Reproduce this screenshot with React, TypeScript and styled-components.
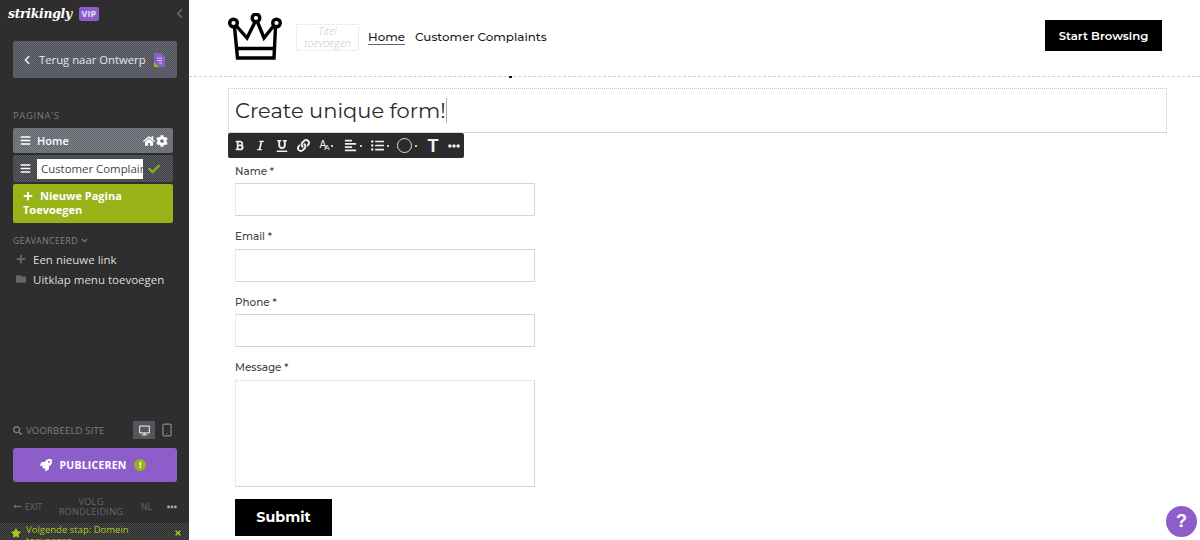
import React from "react";
import styled, { createGlobalStyle } from "styled-components";
import {
  FaAlignLeft,
  FaBars,
  FaBold,
  FaCheck,
  FaChevronDown,
  FaChevronLeft,
  FaCog,
  FaDesktop,
  FaEllipsisH,
  FaFolder,
  FaHome,
  FaItalic,
  FaLink,
  FaListUl,
  FaLongArrowAltLeft,
  FaPlus,
  FaRocket,
  FaSearch,
  FaStar,
  FaTimes,
  FaUnderline,
} from "react-icons/fa";
import { Smartphone } from "lucide-react";

const GlobalStyle = createGlobalStyle`
  html, body {
    margin: 0;
    padding: 0;
    height: 540px;
    overflow: hidden;
    background: #fff;
  }
  * { box-sizing: border-box; }
`;

const dither = (a: string, b: string) =>
  `repeating-conic-gradient(${a} 0 25%, ${b} 0 50%) 0 0 / 2px 2px`;

const Page = styled.div`
  position: relative;
  display: flex;
  width: 1200px;
  height: 540px;
  overflow: hidden;
  font-family: "Open Sans", "Liberation Sans", sans-serif;
`;

const Sidebar = styled.aside`
  display: flex;
  flex-direction: column;
  width: 189px;
  height: 540px;
  flex: none;
  background: #2e2e2e;
  color: #e4e4e4;
`;

const BrandRow = styled.div`
  display: flex;
  align-items: center;
  height: 27px;
  padding: 0 4px 0 8px;
`;

const Wordmark = styled.span`
  font-family: "DejaVu Serif", serif;
  font-style: italic;
  font-weight: 700;
  font-size: 12.4px;
  letter-spacing: -0.3px;
  color: #fff;
`;

const VipBadge = styled.span`
  margin-left: 7px;
  width: 20px;
  height: 14px;
  border-radius: 2px;
  background: #8d5ec9;
  color: #e8e0f4;
  font-size: 9px;
  font-weight: 700;
  line-height: 14px;
  text-align: center;
`;

const Collapse = styled.span`
  margin-left: auto;
  display: flex;
  color: #666;
  font-size: 11px;
`;

const BackButton = styled.div`
  display: flex;
  align-items: center;
  margin: 14px 12px 0 13px;
  height: 37px;
  padding: 0 12px 0 9px;
  border-radius: 2px;
  background: ${dither("#50525c", "#666871")};
  font-size: 11.3px;
  color: #e6e6e6;
  > svg:first-child { font-size: 10px; margin-right: 7px; }
  > svg:last-child { margin-left: auto; }
`;

const SectionLabel = styled.div`
  margin: 31px 0 0 13px;
  height: 14px;
  font-size: 9.5px;
  line-height: 14px;
  letter-spacing: 0.6px;
  color: #7c7c7c;
`;

const PageList = styled.div`
  display: flex;
  flex-direction: column;
  gap: 2px;
  margin: 5px 16px 0 13px;
`;

const PageRow = styled.div<{ $editing?: boolean }>`
  display: flex;
  align-items: center;
  height: ${(p) => (p.$editing ? "27px" : "25px")};
  padding: 0 5px 0 7px;
  border-radius: 2px;
  background: ${(p) =>
    p.$editing ? dither("#3f4047", "#5a5c64") : dither("#666871", "#7b7d85")};
  color: #fff;
  font-size: 11px;
  font-weight: 600;
  gap: 6px;
`;

const RowIcons = styled.span`
  display: flex;
  align-items: center;
  gap: 1px;
  margin-left: auto;
  font-size: 12px;
`;

const NameInput = styled.span`
  width: 106px;
  height: 20px;
  padding: 0 4px;
  background: #fff;
  color: #444;
  font-size: 11.4px;
  font-weight: 400;
  line-height: 20px;
  white-space: nowrap;
  overflow: hidden;
`;

const SaveCheck = styled.span`
  display: flex;
  margin-left: -1px;
  color: #8ea61c;
  font-size: 12px;
`;

const AddPage = styled.div`
  height: 39px;
  padding: 5px 5px 0 10px;
  border-radius: 2px;
  background: #97b317;
  color: #fff;
  font-size: 11px;
  font-weight: 700;
  line-height: 14px;
  svg { font-size: 10px; margin-right: 7px; vertical-align: -1px; }
`;

const AdvancedLabel = styled.div`
  display: flex;
  align-items: center;
  gap: 3px;
  margin: 11px 0 3px 13px;
  height: 12px;
  font-size: 8.5px;
  letter-spacing: 0.5px;
  color: #858585;
  svg { font-size: 7px; }
`;

const ExtraLink = styled.div`
  display: flex;
  align-items: center;
  height: 20px;
  padding-left: 16px;
  font-size: 11.5px;
  color: #ddd;
  svg { width: 10px; font-size: 10px; margin-right: 7px; color: #666; }
`;

const SideBottom = styled.div`
  margin-top: auto;
`;

const PreviewRow = styled.div`
  display: flex;
  align-items: center;
  height: 18px;
  padding-left: 13px;
  font-size: 9.5px;
  letter-spacing: 0.2px;
  color: #7e7e7e;
  svg { flex: none; }
`;

const PreviewText = styled.span`
  margin-left: 4px;
  width: 107px;
`;

const DeviceButton = styled.span<{ $active?: boolean }>`
  display: flex;
  align-items: center;
  justify-content: center;
  width: 22px;
  height: 18px;
  margin-right: 1px;
  background: ${(p) => (p.$active ? dither("#4a4c53", "#5e6067") : "transparent")};
  color: ${(p) => (p.$active ? "#d8d8d8" : "#8a8a8a")};
  font-size: 11px;
`;

const PublishButton = styled.div`
  display: flex;
  align-items: center;
  justify-content: center;
  margin: 9px 12px 0 13px;
  height: 34px;
  padding-right: 4px;
  border-radius: 3px;
  background: #8d5ec9;
  color: #fff;
  font-size: 10.5px;
  font-weight: 700;
  letter-spacing: 0.2px;
  svg { font-size: 12px; margin-right: 8px; }
`;

const Notice = styled.span`
  display: inline-block;
  width: 12px;
  height: 12px;
  margin-left: 8px;
  border-radius: 50%;
  background: #97b317;
  color: #fff;
  font-size: 9px;
  line-height: 12px;
  text-align: center;
`;

const FooterNav = styled.div`
  display: flex;
  align-items: center;
  height: 41px;
  padding: 8px 12px 0 13px;
  color: #666;
  font-size: 8.5px;
  letter-spacing: 0.2px;
`;

const FooterExit = styled.span`
  display: flex;
  align-items: center;
  gap: 3px;
  width: 43px;
  svg { font-size: 9px; }
`;

const FooterGuide = styled.span`
  width: 70px;
  font-size: 9.3px;
  line-height: 10px;
  text-align: center;
`;

const FooterLang = styled.span`
  margin-left: 15px;
`;

const FooterMore = styled.span`
  display: flex;
  margin-left: auto;
  font-size: 10px;
  color: #aaa;
`;

const NextStep = styled.div`
  display: flex;
  height: 17px;
  overflow: hidden;
  padding: 1px 7px 0 11px;
  background: ${dither("#2a2a2a", "#4a4a4a")};
  color: #a9c91e;
  font-size: 9.5px;
  line-height: 11px;
`;

const NextStepStar = styled.span`
  display: flex;
  flex: none;
  margin: 4px 5px 0 0;
  font-size: 10px;
`;

const NextStepClose = styled.span`
  display: flex;
  flex: none;
  margin: 5px 0 0 auto;
  font-size: 8px;
`;

const NextStepText = styled.span`
  width: 118px;
`;

const Main = styled.main`
  flex: 1;
  min-width: 0;
  height: 540px;
  overflow: hidden;
  background: #fff;
  font-family: "Montserrat", "Noto Sans", "Open Sans", sans-serif;
`;

const SiteHeader = styled.header`
  position: relative;
  display: flex;
  align-items: center;
  height: 77px;
  padding: 0 38px 5px 39px;
  border-bottom: 1px dashed #cfcfcf;
`;

const CrownSvg = styled.svg`
  flex: none;
  margin-top: 1px;
`;

const SiteTitle = styled.div`
  width: 63px;
  height: 27px;
  margin: 4px 0 0 14px;
  border: 1px dotted #dcdcdc;
  color: #c8c8c8;
  font-family: "Open Sans", sans-serif;
  font-style: italic;
  font-weight: 300;
  font-size: 10.5px;
  line-height: 12px;
  text-align: center;
`;

const SiteNav = styled.nav`
  display: flex;
  gap: 10px;
  margin: 2px 0 0 9px;
`;

const NavLink = styled.span<{ $active?: boolean }>`
  font-size: 11.9px;
  font-weight: 500;
  line-height: 15px;
  color: #1c1c1c;
  border-bottom: 1px solid ${(p) => (p.$active ? "#666" : "transparent")};
`;

const StartButton = styled.div`
  margin: 0 0 0 auto;
  width: 117px;
  height: 31px;
  background: #000;
  color: #fff;
  font-size: 11.7px;
  font-weight: 600;
  line-height: 32px;
  text-align: center;
`;

const HeaderDot = styled.span`
  position: absolute;
  left: 320px;
  bottom: -2px;
  width: 3px;
  height: 2px;
  background: #111;
`;

const Content = styled.section`
  padding: 11px 33px 0 39px;
`;

const HeadingBox = styled.div`
  height: 45px;
  padding-left: 6px;
  border: 1px dotted #c4c4c4;
  border-bottom: 1px solid #d4d4d4;
  color: #2a2a2a;
  font-size: 21px;
  line-height: 44px;
  span { border-right: 1px solid #aaa; padding-right: 0; }
`;

const EditorBar = styled.div`
  display: flex;
  align-items: center;
  width: 236px;
  height: 25px;
  border-radius: 2px;
  background: #2b2b2b;
  color: #f0f0f0;
`;

const BarSlot = styled.span<{ $w: number; $size?: number }>`
  display: flex;
  align-items: center;
  justify-content: center;
  flex: none;
  width: ${(p) => p.$w}px;
  font-size: ${(p) => p.$size ?? 11}px;
`;

const BigT = styled.span`
  font-family: "Liberation Sans", sans-serif;
  font-size: 18px;
  font-weight: 700;
  line-height: 18px;
`;

const DoubleA = styled.span`
  font-family: "Liberation Sans", sans-serif;
  font-size: 10px;
  line-height: 12px;
  letter-spacing: -2px;
  small { font-size: 8px; position: relative; top: 2px; }
`;

const Caret = styled.span`
  display: inline-block;
  width: 2px;
  height: 2px;
  margin: 0 0 0 3px;
  background: #ccc;
`;

const BarCircle = styled.span`
  display: inline-block;
  width: 15px;
  height: 15px;
  border: 1px solid #ddd;
  border-radius: 50%;
`;

const FormArea = styled.form`
  display: flex;
  flex-direction: column;
  align-items: flex-start;
  padding: 4.5px 0 0 7px;
`;

const FieldLabel = styled.label`
  height: 20.5px;
  font-size: 10.4px;
  font-weight: 500;
  line-height: 18px;
  color: #444;
`;

const FieldBox = styled.div<{ $tall?: boolean }>`
  width: 300px;
  height: ${(p) => (p.$tall ? "107px" : "33px")};
  margin-bottom: 12px;
  border: 1px solid #d4d4d4;
  border-left-style: dotted;
  border-top-style: ${(p) => (p.$tall ? "dotted" : "solid")};
`;

const SubmitButton = styled.div`
  width: 97px;
  height: 37px;
  background: #000;
  color: #fff;
  font-size: 14.3px;
  font-weight: 700;
  line-height: 37px;
  text-align: center;
`;

const HelpBubble = styled.div`
  position: absolute;
  right: 3px;
  bottom: 3px;
  width: 31px;
  height: 31px;
  border-radius: 50%;
  background: #8d5ec9;
  color: #fff;
  font-family: "Liberation Sans", sans-serif;
  font-size: 18px;
  font-weight: 700;
  line-height: 31px;
  text-align: center;
`;

function Crown() {
  return (
    <CrownSvg width="54" height="47" viewBox="0 0 54 47" fill="none" stroke="#000" strokeWidth="3.4">
      <circle cx="5.5" cy="10" r="3.8" />
      <circle cx="28" cy="5" r="3.8" />
      <circle cx="48.5" cy="10" r="3.8" />
      <path d="M8.5 13 L19 25 L27 9 M29.5 9 L36 25 L45.5 13 M6.5 14 L9.5 45 H46 L47.5 14" />
      <path d="M9 35.5 H46.5" />
    </CrownSvg>
  );
}

function DocIcon() {
  return (
    <svg width="11" height="14" viewBox="0 0 11 14">
      <path d="M0 0 H7 L11 4 V14 H0 Z" fill="#8d5ec9" />
      <path d="M0 14 V9 L5 14 Z" fill="#97b317" />
      <path d="M3 5 H8 M3 7.5 H8 M5 10 H8" stroke="#d9c8ef" strokeWidth="1" />
    </svg>
  );
}

const fields = [
  { label: "Name *" },
  { label: "Email *" },
  { label: "Phone *" },
  { label: "Message *", tall: true },
];

export default function App() {
  return (
    <Page>
      <GlobalStyle />
      <Sidebar>
        <BrandRow>
          <Wordmark>strikingly</Wordmark>
          <VipBadge>VIP</VipBadge>
          <Collapse>
            <FaChevronLeft />
          </Collapse>
        </BrandRow>
        <BackButton>
          <FaChevronLeft />
          Terug naar Ontwerp
          <DocIcon />
        </BackButton>
        <SectionLabel>PAGINA'S</SectionLabel>
        <PageList>
          <PageRow>
            <FaBars />
            Home
            <RowIcons>
              <FaHome />
              <FaCog />
            </RowIcons>
          </PageRow>
          <PageRow $editing>
            <FaBars />
            <NameInput>Customer Complaints</NameInput>
            <SaveCheck>
              <FaCheck />
            </SaveCheck>
          </PageRow>
          <AddPage>
            <FaPlus />
            Nieuwe Pagina Toevoegen
          </AddPage>
        </PageList>
        <AdvancedLabel>
          GEAVANCEERD <FaChevronDown />
        </AdvancedLabel>
        <ExtraLink>
          <FaPlus />
          Een nieuwe link
        </ExtraLink>
        <ExtraLink>
          <FaFolder />
          Uitklap menu toevoegen
        </ExtraLink>
        <SideBottom>
          <PreviewRow>
            <FaSearch size={9} />
            <PreviewText>VOORBEELD SITE</PreviewText>
            <DeviceButton $active>
              <FaDesktop />
            </DeviceButton>
            <DeviceButton>
              <Smartphone size={14} />
            </DeviceButton>
          </PreviewRow>
          <PublishButton>
            <FaRocket />
            PUBLICEREN
            <Notice>!</Notice>
          </PublishButton>
          <FooterNav>
            <FooterExit>
              <FaLongArrowAltLeft />
              EXIT
            </FooterExit>
            <FooterGuide>VOLG RONDLEIDING</FooterGuide>
            <FooterLang>NL</FooterLang>
            <FooterMore>
              <FaEllipsisH />
            </FooterMore>
          </FooterNav>
          <NextStep>
            <NextStepStar>
              <FaStar />
            </NextStepStar>
            <NextStepText>Volgende stap: Domein toevoegen</NextStepText>
            <NextStepClose>
              <FaTimes />
            </NextStepClose>
          </NextStep>
        </SideBottom>
      </Sidebar>
      <Main>
        <SiteHeader>
          <Crown />
          <SiteTitle>Titel toevoegen</SiteTitle>
          <SiteNav>
            <NavLink $active>Home</NavLink>
            <NavLink>Customer Complaints</NavLink>
          </SiteNav>
          <StartButton>Start Browsing</StartButton>
          <HeaderDot />
        </SiteHeader>
        <Content>
          <HeadingBox>
            <span>Create unique form!</span>
          </HeadingBox>
          <EditorBar>
            <BarSlot $w={22} $size={11}>
              <FaBold />
            </BarSlot>
            <BarSlot $w={21} $size={11}>
              <FaItalic />
            </BarSlot>
            <BarSlot $w={21} $size={12}>
              <FaUnderline />
            </BarSlot>
            <BarSlot $w={22} $size={13}>
              <FaLink />
            </BarSlot>
            <BarSlot $w={24}>
              <DoubleA>
                A<small>A</small>
              </DoubleA>
              <Caret />
            </BarSlot>
            <BarSlot $w={30} $size={13}>
              <FaAlignLeft />
              <Caret />
            </BarSlot>
            <BarSlot $w={24} $size={13}>
              <FaListUl />
              <Caret />
            </BarSlot>
            <BarSlot $w={30}>
              <BarCircle />
              <Caret />
            </BarSlot>
            <BarSlot $w={22}>
              <BigT>T</BigT>
            </BarSlot>
            <BarSlot $w={20} $size={12}>
              <FaEllipsisH />
            </BarSlot>
          </EditorBar>
          <FormArea>
            {fields.map((f) => (
              <React.Fragment key={f.label}>
                <FieldLabel>{f.label}</FieldLabel>
                <FieldBox $tall={f.tall} />
              </React.Fragment>
            ))}
            <SubmitButton>Submit</SubmitButton>
          </FormArea>
        </Content>
      </Main>
      <HelpBubble>?</HelpBubble>
    </Page>
  );
}
